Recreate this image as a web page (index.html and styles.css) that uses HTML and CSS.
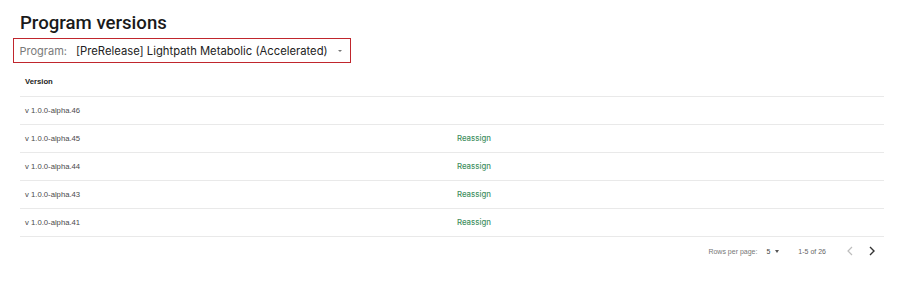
FILE: index.html
```html
<!DOCTYPE html>
<html>
<head>
<meta charset="utf-8">
<link rel="stylesheet" href="styles.css">
</head>
<body>
<div class="page">
  <h1 class="title">Program versions</h1>
  <div class="program-select">
    <span class="select-label">Program:</span>
    <span class="select-value">[PreRelease] Lightpath Metabolic (Accelerated)</span>
    <span class="caret"></span>
  </div>
  <table class="versions">
    <thead>
      <tr><th>Version</th><th></th></tr>
    </thead>
    <tbody>
      <tr><td>v 1.0.0-alpha.46</td><td></td></tr>
      <tr><td>v 1.0.0-alpha.45</td><td><a class="reassign">Reassign</a></td></tr>
      <tr><td>v 1.0.0-alpha.44</td><td><a class="reassign">Reassign</a></td></tr>
      <tr><td>v 1.0.0-alpha.43</td><td><a class="reassign">Reassign</a></td></tr>
      <tr><td>v 1.0.0-alpha.41</td><td><a class="reassign">Reassign</a></td></tr>
    </tbody>
  </table>
  <div class="pagination">
    <span class="rows-label">Rows per page:</span>
    <span class="rows-value">5</span>
    <span class="caret small"></span>
    <span class="range">1-5 of 26</span>
    <span class="nav prev"><svg width="8" height="10" viewBox="0 0 8 10"><path d="M6 1 L2 5 L6 9" fill="none" stroke="#bdbdbd" stroke-width="1.2"/></svg></span>
    <span class="nav next"><svg width="8" height="10" viewBox="0 0 8 10"><path d="M2 1 L6 5 L2 9" fill="none" stroke="#333" stroke-width="1.4"/></svg></span>
  </div>
</div>
</body>
</html>
```
FILE: styles.css
```css
html, body {
  margin: 0;
  padding: 0;
  background: #fff;
}
.page {
  padding: 11px 16px 0 20px;
  font-family: "Liberation Sans", Arial, sans-serif;
}
.title {
  margin: 0;
  font-family: Roboto, "Noto Sans", sans-serif;
  font-weight: 500;
  font-size: 18.6px;
  line-height: 24px;
  color: #1a1a1a;
}
.program-select {
  display: inline-flex;
  align-items: center;
  margin-top: 3px;
  margin-left: -7px;
  width: 338px;
  height: 25px;
  box-sizing: border-box;
  border: 1.5px solid #c0262d;
  padding-left: 5.5px;
  font-family: Inter, "Noto Sans", sans-serif;
  font-size: 11px;
}
.select-label {
  color: #7a7a7a;
}
.select-value {
  margin-left: 9px;
  color: #222;
  font-size: 11.25px;
}
.caret {
  width: 0;
  height: 0;
  border-left: 2.5px solid transparent;
  border-right: 2.5px solid transparent;
  border-top: 2.5px solid #777;
  margin-left: 10px;
}
.versions {
  margin-top: 3.5px;
  width: 100%;
  border-collapse: collapse;
  font-size: 7.7px;
}
.versions th, .versions td {
  width: 50%;
  text-align: left;
  padding: 0 0 0 5px;
  border-bottom: 1px solid #e9e9e9;
}
.versions th {
  height: 29px;
  font-weight: bold;
  color: #222;
}
.versions td {
  height: 27px;
  color: #4a4a4a;
}
.reassign {
  font-family: Inter, "Noto Sans", sans-serif;
  font-weight: 500;
  font-size: 7.8px;
  color: #3f8f5f;
}
.pagination {
  display: flex;
  justify-content: flex-end;
  align-items: center;
  height: 29px;
  font-size: 7px;
  color: #777;
}
.rows-value {
  margin-left: 9px;
  color: #444;
}
.caret.small {
  margin-left: 5px;
  border-left-width: 2.5px;
  border-right-width: 2.5px;
  border-top: 3px solid #555;
}
.range {
  margin-left: 19px;
  color: #666;
}
.nav {
  display: flex;
  align-items: center;
}
.prev {
  margin-left: 20px;
}
.next {
  margin-left: 14px;
  margin-right: 8px;
}
```
